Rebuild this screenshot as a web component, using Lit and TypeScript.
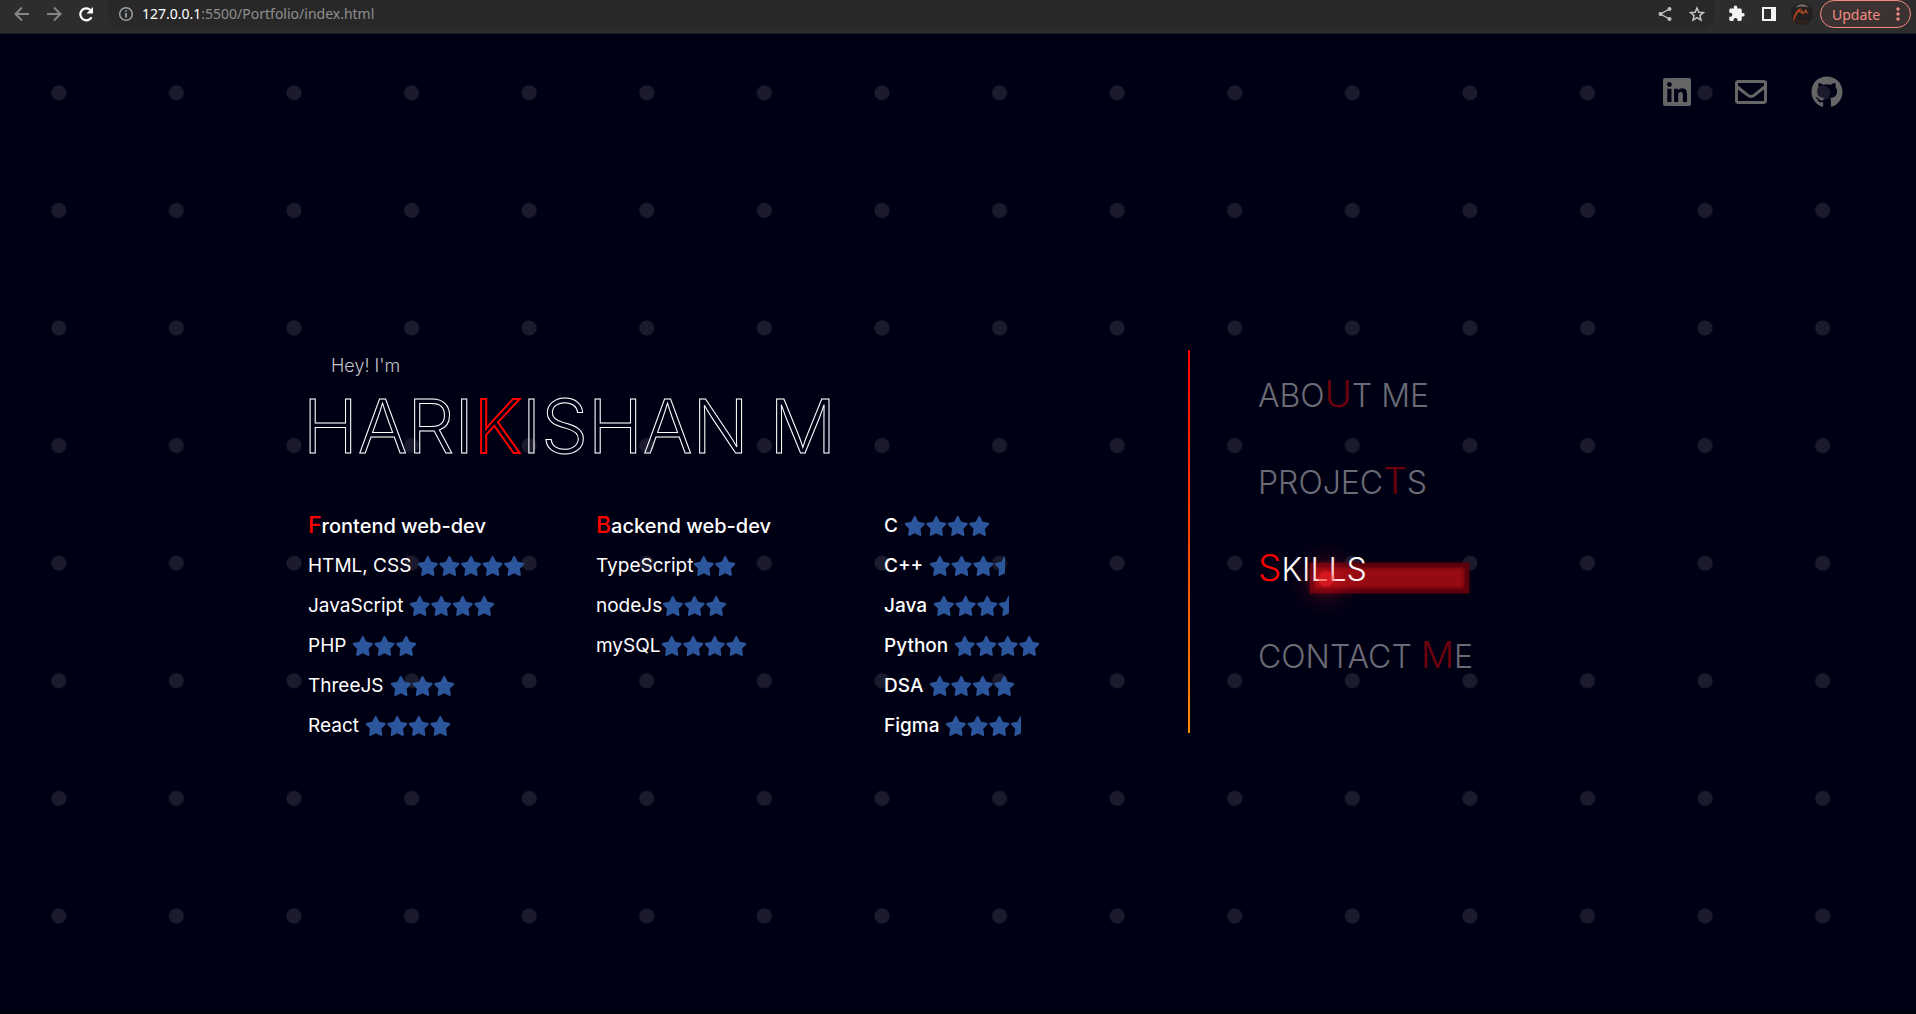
import { LitElement, html, css, svg } from "lit";
import { customElement, property } from "lit/decorators.js";

const STAR =
  "M259.3 17.8L194 150.2 47.9 171.5c-26.2 3.8-36.7 36.1-17.7 54.6l105.7 103-25 145.5c-4.5 26.3 23.2 46 46.4 33.7L288 439.6l130.7 68.7c23.2 12.2 50.9-7.4 46.4-33.7l-25-145.5 105.7-103c19-18.5 8.5-50.8-17.7-54.6L382 150.2 316.7 17.8c-11.7-23.6-45.6-23.9-57.4 0z";

interface Skill { name: string; stars: number; tight?: boolean; }
interface Group { title?: string; skills: Skill[]; }

const GROUPS: Group[] = [
  {
    title: "Frontend web-dev",
    skills: [
      { name: "HTML, CSS", stars: 5 },
      { name: "JavaScript", stars: 4 },
      { name: "PHP", stars: 3 },
      { name: "ThreeJS", stars: 3 },
      { name: "React", stars: 4 },
    ],
  },
  {
    title: "Backend web-dev",
    skills: [
      { name: "TypeScript", stars: 2, tight: true },
      { name: "nodeJs", stars: 3, tight: true },
      { name: "mySQL", stars: 4, tight: true },
    ],
  },
  {
    skills: [
      { name: "C", stars: 4 },
      { name: "C++", stars: 3.5 },
      { name: "Java", stars: 3.5 },
      { name: "Python", stars: 4 },
      { name: "DSA", stars: 4 },
      { name: "Figma", stars: 3.5 },
    ],
  },
];

@customElement("star-rating")
export class StarRating extends LitElement {
  @property({ type: Number }) value = 0;

  static styles = css`
    :host { display: inline-flex; }
    .stars { display: block; fill: #2b569b; }
  `;

  render() {
    const slots = Array.from({ length: Math.ceil(this.value) }, (_, i) => i);
    return html`<svg class="stars" role="img" aria-label="${this.value} stars"
      width=${Math.round(this.value * 21.6)} height="20"
      viewBox="0 0 ${576 * this.value} 512" preserveAspectRatio="none">
      ${slots.map((i) => svg`<path transform="translate(${i * 576} 0)" d=${STAR}></path>`)}
    </svg>`;
  }
}

@customElement("browser-bar")
export class BrowserBar extends LitElement {
  static styles = css`
    :host {
      display: flex; align-items: flex-start; box-sizing: border-box; height: 34px;
      background: #2d2d2d; border-bottom: 1px solid #1d1d1d;
      font-family: "Noto Sans", "Open Sans", sans-serif; font-size: 14px;
    }
    button { display: block; border: 0; padding: 0; background: none; color: inherit; font: inherit; }
    svg { display: block; }
    .nav { display: flex; gap: 12px; padding: 4px 12px; color: #858585; }
    .nav .reload { color: #fff; }
    .address {
      flex: 1; display: flex; align-items: flex-start; height: 29px; box-sizing: border-box;
      padding: 4px 8px 0; background: #282828; border-radius: 0 0 14px 14px; color: #9aa0a6;
    }
    .url { flex: 1; padding-left: 6px; color: #8f8f8f; line-height: 20px; }
    .host { color: #fff; }
    .tools { display: flex; align-items: center; gap: 12px; color: #c4c4c4; }
    .ext { display: flex; align-items: center; gap: 12px; height: 28px; padding: 0 7px 0 12px; color: #f4f4f4; }
    .update {
      display: flex; align-items: center; justify-content: space-between;
      box-sizing: border-box; width: 91px; height: 28px; margin-right: 5px;
      padding: 0 10px 0 11px; border: 1px solid #f28b82; border-radius: 14px;
      background: #3d3232; color: #f28b82;
    }
  `;

  render() {
    return html`
      <div class="nav">
        <button aria-label="Back"><svg width="20" height="20" viewBox="0 0 20 20" fill="none" stroke="currentColor" stroke-width="2"><path d="M17 10H4M10 3.500L3.500 10l6.500 6.500"/></svg></button>
        <button aria-label="Forward"><svg width="20" height="20" viewBox="0 0 20 20" fill="none" stroke="currentColor" stroke-width="2"><path d="M3 10h13M10 3.500L16.500 10 10 16.500"/></svg></button>
        <button class="reload" aria-label="Reload"><svg width="20" height="20" viewBox="0 0 20 20"><path d="M15.600 13.200A6 6 0 1 1 14.300 5.800" fill="none" stroke="currentColor" stroke-width="2.200"/><path d="M17 3v6.500h-6.500z" fill="currentColor"/></svg></button>
      </div>
      <div class="address">
        <svg width="20" height="20" viewBox="0 0 20 20" fill="none" stroke="currentColor" stroke-width="1.500"><circle cx="10" cy="10" r="6.300"/><path d="M10 9v4.500M10 6.200v1.600" stroke-width="1.800"/></svg>
        <div class="url"><span class="host">127.0.0.1</span>:5500/Portfolio/index.html</div>
        <div class="tools">
          <button aria-label="Share"><svg width="20" height="20" viewBox="0 0 20 20"><path d="M14.500 5L5.500 10l9 5" fill="none" stroke="currentColor" stroke-width="1.400"/><g fill="currentColor"><circle cx="14.500" cy="5" r="2"/><circle cx="5.500" cy="10" r="2"/><circle cx="14.500" cy="15" r="2"/></g></svg></button>
          <button aria-label="Bookmark"><svg width="20" height="20" viewBox="0 0 20 20" fill="none" stroke="currentColor" stroke-width="1.500"><path d="M10 4l1.800 4.200 4.600.4-3.500 3 1.100 4.500-4-2.400-4 2.400 1.100-4.500-3.500-3 4.600-.4z"/></svg></button>
        </div>
      </div>
      <div class="ext">
        <button aria-label="Extensions"><svg width="20" height="20" viewBox="0 0 24 24" fill="currentColor"><path d="M20.500 11H19V7c0-1.100-.9-2-2-2h-4V3.500a2.500 2.500 0 0 0-5 0V5H4c-1.100 0-2 .9-2 2v3.800h1.500a2.700 2.700 0 0 1 0 5.400H2V20c0 1.100.9 2 2 2h3.800v-1.500a2.700 2.700 0 0 1 5.400 0V22H17c1.100 0 2-.9 2-2v-4h1.500a2.500 2.500 0 0 0 0-5z" transform="translate(1 1) scale(.88)"/></svg></button>
        <button aria-label="Side panel"><svg width="20" height="20" viewBox="0 0 20 20"><path d="M3 3h14v14H3zM5 5v10h7V5z" fill="currentColor" fill-rule="evenodd"/></svg></button>
        <button aria-label="Profile"><svg width="22" height="22" viewBox="0 0 22 22"><circle cx="11" cy="11" r="11" fill="#24201f"/><path d="M4 4.500Q11-2 18 4.500Q11 2.500 4 4.500" fill="#77706c"/><path d="M2 17Q4 7 10 5L9 9Q6 8 3 18z" fill="#b9431c"/><path d="M9 10l2-4 1 4 3-4 2 5-3-2-2 3-1-2z" fill="#c25024"/><path d="M4 15q7 6 14 0l-3 5H7z" fill="#35201a"/></svg></button>
      </div>
      <button class="update"><span>Update</span><svg width="4" height="14" viewBox="0 0 4 14" fill="currentColor"><circle cx="2" cy="2" r="1.700"/><circle cx="2" cy="7" r="1.700"/><circle cx="2" cy="12" r="1.700"/></svg></button>
    `;
  }
}

@customElement("app-root")
export class AppRoot extends LitElement {
  static styles = css`
    :host {
      --bar: 34px;
      --tile: calc((100vh - var(--bar)) * 0.12);
      display: flex; flex-direction: column; min-height: 100vh;
      background: #000014; color: #fff;
      font-family: Inter, "Open Sans", sans-serif;
    }
    .page {
      position: relative; flex: 1; display: flex; flex-direction: column;
      border-bottom: 4px solid #00000a; box-sizing: border-box;
      background-image: radial-gradient(circle at center, #1b1b2d 7px, transparent 8px);
      background-size: var(--tile) var(--tile);
    }
    .social { display: flex; justify-content: flex-end; gap: 44px; padding: 42px 73px 0 0; }
    .social a { display: block; color: #666; }
    .social svg { display: block; fill: currentColor; }
    .content { display: flex; align-items: stretch; padding: 242px 0 0 308px; }
    .main { width: 880px; box-sizing: border-box; }
    .hello { margin: 0; padding: 4px 0 0 23px; font-size: 18px; line-height: 24px; font-weight: 300; color: #c4c4ca; }
    .name {
      margin: 0 0 0 -5px; font-size: 74px; line-height: 96px; font-weight: 300; white-space: nowrap;
      color: transparent; -webkit-text-stroke: 1px #fff;
    }
    .name .hot { -webkit-text-stroke: 2px #f00; }
    .groups { display: grid; grid-template-columns: repeat(3, 288px); padding-top: 32px; }
    .group { font-size: 19px; line-height: 40px; }
    .group.strong { font-weight: 500; }
    .title { margin: 0; font-size: 20px; line-height: 40px; font-weight: 500; }
    .title::first-letter { font-size: 23px; line-height: 24px; color: #f00; }
    .rows { margin: 0; padding: 0; list-style: none; }
    .row { display: flex; align-items: center; gap: 6px; height: 40px; }
    .row.tight { gap: 0; }
    .divider { width: 2px; margin-bottom: 13px; background: linear-gradient(#f00, #ff8c00); }
    .menu { padding: 14px 0 0 68px; }
    .link {
      position: relative; display: block; height: 87px; line-height: 64px;
      font-size: 32px; font-weight: 300; color: #6b6b76; text-decoration: none; white-space: nowrap;
    }
    .link .hot { font-size: 37px; line-height: 40px; color: #6e000e; }
    .link.active { color: #fff; }
    .link.active .hot { color: #f00; }
    .label { position: relative; }
    .beam {
      position: absolute; left: 52px; top: 25px; width: 159px; height: 30px; box-sizing: border-box;
      background: #960a12; box-shadow: inset 0 0 3px 5px #5c000c, 0 0 3px #5c000c;
    }
    .glow {
      position: absolute; left: 28px; top: 1px; width: 80px; height: 80px; border-radius: 50%;
      background: radial-gradient(circle, rgba(255, 34, 40, 0.6) 7px, rgba(255, 24, 40, 0.24) 8px, rgba(255, 24, 40, 0.06) 24px, rgba(255, 24, 40, 0) 38px);
    }
  `;

  private groupView(g: Group) {
    return html`<section class="group ${g.title ? "" : "strong"}">
      ${g.title ? html`<h2 class="title">${g.title}</h2>` : ""}
      <ul class="rows">
        ${g.skills.map((s) => html`<li class="row ${s.tight ? "tight" : ""}"><span>${s.name}</span><star-rating .value=${s.stars}></star-rating></li>`)}
      </ul>
    </section>`;
  }

  render() {
    return html`
      <browser-bar></browser-bar>
      <main class="page">
        <nav class="social" aria-label="Social">
          <a href="#linkedin" aria-label="LinkedIn"><svg width="28" height="32" viewBox="0 0 448 512"><path d="M416 32H31.900C14.300 32 0 46.500 0 64.300v383.400C0 465.500 14.300 480 31.900 480H416c17.600 0 32-14.500 32-32.300V64.300c0-17.800-14.400-32.300-32-32.300zM135.400 416H69V202.200h66.500V416zm-33.200-243c-21.300 0-38.500-17.300-38.500-38.500S80.900 96 102.200 96c21.200 0 38.500 17.300 38.500 38.500 0 21.300-17.200 38.500-38.500 38.500zm282.100 243h-66.400V312c0-24.800-.5-56.700-34.500-56.700-34.600 0-39.900 27-39.900 54.900V416h-66.400V202.200h63.700v29.200h.9c8.900-16.800 30.600-34.500 62.900-34.500 67.200 0 79.700 44.300 79.700 101.900V416z"/></svg></a>
          <a href="#mail" aria-label="Email"><svg width="32" height="32" viewBox="0 0 512 512"><path d="M464 64H48C21.500 64 0 85.500 0 112v288c0 26.500 21.500 48 48 48h416c26.500 0 48-21.500 48-48V112c0-26.500-21.500-48-48-48zm0 48v40.800c-22.400 18.300-58.200 46.700-134.600 106.500-16.800 13.200-50.200 45.100-73.400 44.700-23.200.4-56.600-31.500-73.400-44.700C106.200 199.500 70.400 171.100 48 152.800V112h416zM48 400V214.400c22.900 18.300 55.400 43.900 104.900 82.600 21.900 17.200 60.100 55.200 103.100 55 42.700.2 80.500-37.200 103.100-54.900 49.500-38.800 82-64.400 104.900-82.700V400H48z"/></svg></a>
          <a href="#github" aria-label="GitHub"><svg width="32" height="32" viewBox="0 0 496 512"><path d="M165.900 397.400c0 2-2.300 3.600-5.200 3.600-3.300.3-5.600-1.300-5.600-3.600 0-2 2.300-3.600 5.200-3.600 3-.3 5.600 1.300 5.600 3.600zM244.800 8C106.100 8 0 113.300 0 252c0 110.900 69.800 205.800 169.500 239.200 12.800 2.300 17.300-5.600 17.300-12.100 0-6.200-.3-40.400-.3-61.400 0 0-70 15-84.700-29.800 0 0-11.400-29.100-27.800-36.600 0 0-22.900-15.700 1.600-15.400 0 0 24.900 2 38.600 25.800 21.900 38.600 58.600 27.500 72.900 20.900 2.300-16 8.800-27.100 16-33.700-55.900-6.200-112.300-14.300-112.300-110.500 0-27.500 7.600-41.300 23.600-58.900-2.600-6.500-11.100-33.300 2.600-67.900 20.900-6.500 69 27 69 27 20-5.600 41.500-8.500 62.800-8.500s42.800 2.900 62.800 8.500c0 0 48.100-33.600 69-27 13.700 34.700 5.200 61.400 2.600 67.900 16 17.700 25.800 31.500 25.800 58.900 0 96.500-58.900 104.200-114.800 110.500 9.200 7.900 17 22.900 17 46.400 0 33.700-.3 75.400-.3 83.600 0 6.500 4.600 14.400 17.300 12.100C428.200 457.800 496 362.900 496 252 496 113.300 383.500 8 244.800 8z"/></svg></a>
        </nav>
        <div class="content">
          <div class="main">
            <p class="hello">Hey! I'm</p>
            <h1 class="name">HARI<span class="hot">K</span>ISHAN M</h1>
            <div class="groups">${GROUPS.map((g) => this.groupView(g))}</div>
          </div>
          <div class="divider"></div>
          <nav class="menu" aria-label="Sections">
            <a class="link" href="#about">ABO<span class="hot">U</span>T ME</a>
            <a class="link" href="#projects">PROJEC<span class="hot">T</span>S</a>
            <a class="link active" href="#skills" aria-current="page"><span class="beam"></span><span class="label"><span class="hot">S</span>KILLS</span><span class="glow"></span></a>
            <a class="link" href="#contact">CONTACT <span class="hot">M</span>E</a>
          </nav>
        </div>
      </main>
    `;
  }
}
